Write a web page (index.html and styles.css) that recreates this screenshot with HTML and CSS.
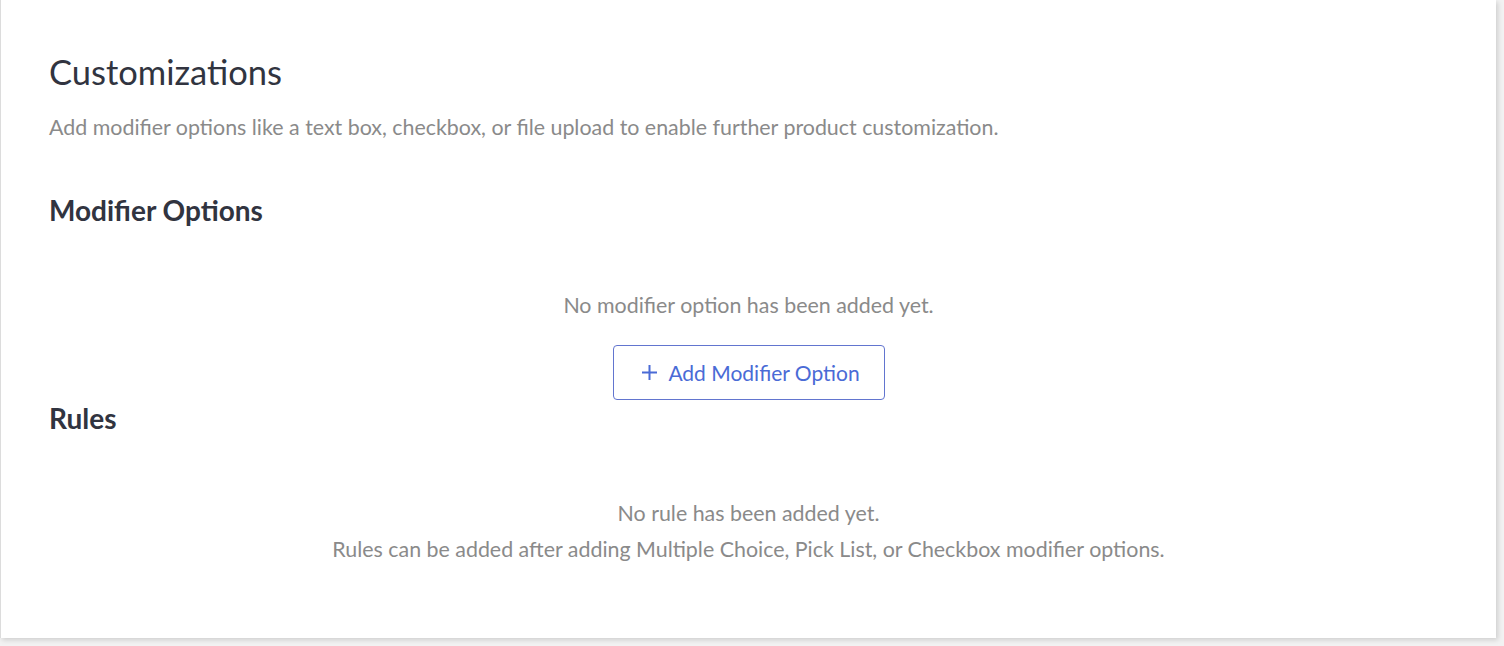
FILE: index.html
```html
<!DOCTYPE html>
<html>
<head>
<meta charset="utf-8">
<link rel="stylesheet" href="styles.css">
</head>
<body>
<div class="page">
  <section class="card">
    <h1 class="title">Customizations</h1>
    <p class="desc">Add modifier options like a text box, checkbox, or file upload to enable further product customization.</p>
    <h2 class="section-title modifiers-title">Modifier Options</h2>
    <div class="empty empty-modifiers">
      <p class="empty-text">No modifier option has been added yet.</p>
      <button class="add-btn" type="button">
        <svg class="plus" width="17" height="17" viewBox="0 0 17 17"><path d="M8.5 1v15M1 8.5h15" stroke="currentColor" stroke-width="2" fill="none"/></svg>
        <span>Add Modifier Option</span>
      </button>
    </div>
    <h2 class="section-title rules-title">Rules</h2>
    <div class="empty empty-rules">
      <p class="empty-text">No rule has been added yet.</p>
      <p class="empty-text">Rules can be added after adding Multiple Choice, Pick List, or Checkbox modifier options.</p>
    </div>
  </section>
</div>
</body>
</html>
```
FILE: styles.css
```css
html, body {
  margin: 0;
  padding: 0;
}
body {
  background: #f2f2f2;
  font-family: "Lato", "Liberation Sans", sans-serif;
  width: 1504px;
  height: 646px;
  overflow: hidden;
}
.page {
  display: flex;
}
.card {
  width: 1496px;
  height: 638px;
  box-sizing: border-box;
  background: #ffffff;
  border-left: 1px solid #dcdcdc;
  box-shadow: 2px 2px 5px rgba(0,0,0,0.15);
  padding: 0 0 0 48px;
  display: flex;
  flex-direction: column;
}
.title {
  margin: 52px 0 0;
  font-size: 34.5px;
  font-weight: 400;
  line-height: 40px;
  color: #313440;
}
.desc {
  margin: 23px 0 0;
  font-size: 21.4px;
  line-height: 24px;
  color: #8a8a8a;
}
.section-title {
  margin: 0;
  font-size: 28px;
  font-weight: 700;
  line-height: 32px;
  color: #313440;
}
.modifiers-title {
  margin-top: 55px;
}
.rules-title {
  margin-top: 2px;
}
.empty {
  display: flex;
  flex-direction: column;
  align-items: center;
  margin-left: -48px;
  width: 1495px;
}
.empty-modifiers {
  margin-top: 63px;
}
.empty-rules {
  margin-top: 61px;
}
.empty-text {
  margin: 0;
  font-size: 21.4px;
  line-height: 36px;
  color: #8a8a8a;
}
.empty-modifiers .empty-text {
  line-height: 33px;
}
.add-btn {
  margin-top: 23px;
  width: 272px;
  height: 55px;
  box-sizing: border-box;
  border: 1px solid #6275cf;
  border-radius: 4px;
  background: #fff;
  color: #4a6bd6;
  font-family: inherit;
  font-size: 21px;
  display: flex;
  align-items: center;
  justify-content: center;
  gap: 10px;
  padding: 0 0 0 4px;
}
.plus {
  display: block;
}
```
